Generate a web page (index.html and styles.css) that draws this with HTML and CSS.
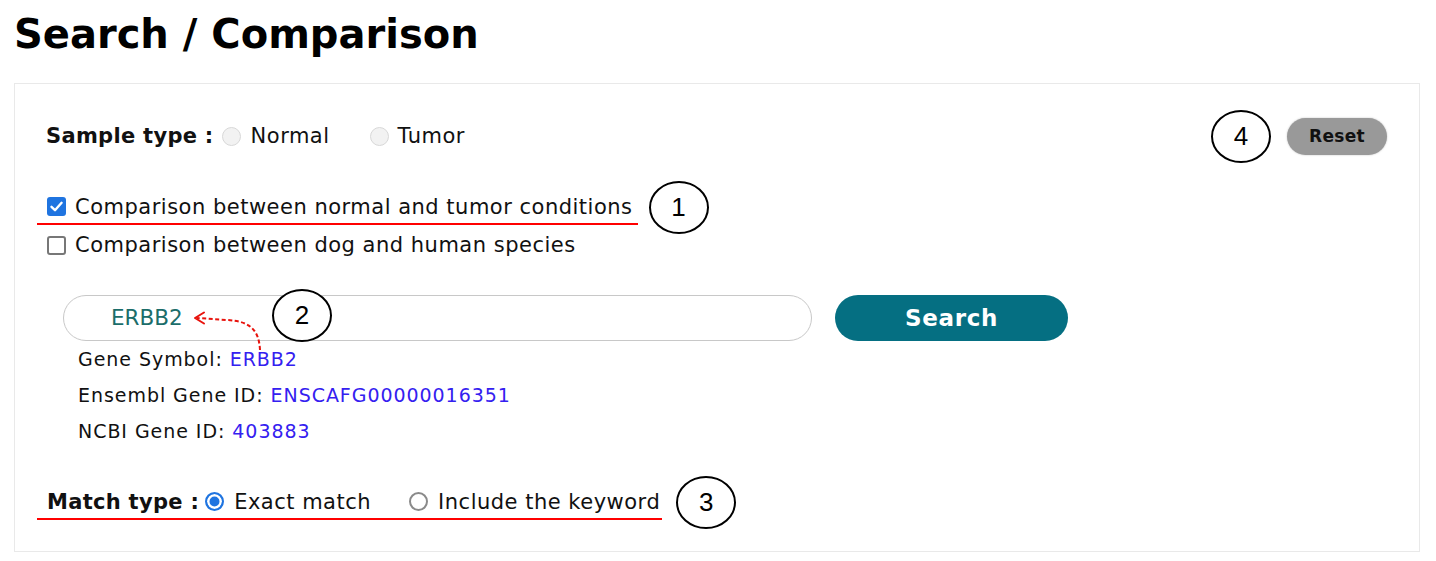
FILE: index.html
```html
<!DOCTYPE html>
<html lang="en">
<head>
<meta charset="utf-8">
<title>Search / Comparison</title>
<link rel="stylesheet" href="styles.css">
</head>
<body>
<div class="page">
  <h1 class="title">Search / Comparison</h1>
  <section class="panel">
    <div class="row-top">
      <div class="sample">
        <span class="label-bold">Sample type :</span>
        <span class="radio radio-disabled"></span><span class="opt">Normal</span>
        <span class="radio radio-disabled spaced"></span><span class="opt">Tumor</span>
      </div>
      <div class="reset-group">
        <span class="note">4</span>
        <button class="btn-reset" type="button">Reset</button>
      </div>
    </div>

    <div class="annot-row first">
      <div class="underlined check-line">
        <span class="check checked"><svg viewBox="0 0 19 19" width="19" height="19"><path d="M4.5 9.8 L8 13.2 L14.6 5.8" fill="none" stroke="#fff" stroke-width="2.4" stroke-linecap="round" stroke-linejoin="round"/></svg></span>
        <span class="opt">Comparison between normal and tumor conditions</span>
      </div>
      <span class="note gap11">1</span>
    </div>
    <div class="check-line plain">
      <span class="check"></span>
      <span class="opt">Comparison between dog and human species</span>
    </div>

    <div class="search-area">
      <div class="search-row">
        <div class="search-input">ERBB2</div>
        <button class="btn-search" type="button">Search</button>
      </div>
      <span class="note note-2">2</span>
      <svg class="arrow" width="240" height="70" viewBox="0 0 240 70">
        <path d="M223 55 C222 36 214 26 190 25 L160 23" fill="none" stroke="#e8120c" stroke-width="2" stroke-dasharray="4 2.5"/>
        <path d="M167 17.5 L158 23 L167 28.5" fill="none" stroke="#e8120c" stroke-width="2" stroke-linecap="round" stroke-linejoin="round"/>
      </svg>
      <ul class="gene-info">
        <li>Gene Symbol: <span class="val">ERBB2</span></li>
        <li>Ensembl Gene ID: <span class="val">ENSCAFG00000016351</span></li>
        <li>NCBI Gene ID: <span class="val">403883</span></li>
      </ul>
    </div>

    <div class="annot-row match">
      <div class="underlined match-line">
        <span class="label-bold">Match type :</span>
        <span class="radio radio-on"></span><span class="opt">Exact match</span>
        <span class="radio radio-off spaced2"></span><span class="opt">Include the keyword</span>
      </div>
      <span class="note gap15">3</span>
    </div>
  </section>
</div>
</body>
</html>
```

FILE: styles.css
```css
* { box-sizing: border-box; }
html, body { margin: 0; padding: 0; background: #fff; }
body {
  font-family: "DejaVu Sans", Verdana, sans-serif;
  color: #111;
}
.page { padding: 0 16px 0 14px; }

.title {
  margin: 11px 0 26px;
  font-size: 40px;
  line-height: 46px;
  font-weight: bold;
  color: #000;
}

.panel {
  border: 1px solid #e9e9e9;
  height: 469px;
  padding: 26px 32px 0 22px;
  position: relative;
}

.opt, .label-bold {
  font-size: 21px;
  letter-spacing: 0.5px;
  line-height: 30px;
}
.label-bold { font-weight: bold; letter-spacing: 0.3px; }

/* top row */
.row-top {
  display: flex;
  justify-content: space-between;
  align-items: center;
  height: 52px;
}
.sample {
  display: flex;
  align-items: center;
  padding-left: 9px;
}
.sample .label-bold { margin-right: 8px; }

.radio {
  display: inline-block;
  width: 19px;
  height: 19px;
  border-radius: 50%;
  flex: none;
  margin-right: 10px;
}
.radio-disabled {
  border: 1px solid #d8d8d8;
  background: #f2f2f2;
}
.radio.spaced { margin-left: 40px; margin-right: 9px; }
.radio-off {
  border: 2px solid #8a8a8a;
  background: #fff;
}
.radio-on {
  border: 2px solid #1f74e0;
  background: #1f74e0;
  box-shadow: inset 0 0 0 2.5px #fff;
}
.radio.spaced2 { margin-left: 38px; margin-right: 10px; }

.reset-group {
  display: flex;
  align-items: center;
  gap: 16px;
}
.btn-reset {
  width: 100px;
  height: 37px;
  border: none;
  border-radius: 19px;
  background: #999;
  box-shadow: 0 0 2px rgba(0,0,0,0.25);
  font-family: "DejaVu Sans", Verdana, sans-serif;
  font-weight: bold;
  font-size: 17px;
  letter-spacing: 0.3px;
  color: #111;
  padding: 0;
}

/* annotation circles */
.note {
  display: inline-flex;
  align-items: center;
  justify-content: center;
  width: 60px;
  height: 53px;
  border: 2px solid #000;
  border-radius: 50%;
  font-family: "Liberation Sans", Arial, sans-serif;
  font-size: 26px;
  color: #000;
  background: #fff;
  flex: none;
}

.annot-row {
  display: flex;
  align-items: center;
}
.annot-row.first { margin-top: 19px; }
.gap11 { margin-left: 11px; }
.gap15 { margin-left: 14px; }

.underlined {
  border-bottom: 2px solid #f00;
}

.check-line {
  display: flex;
  align-items: center;
  padding: 0 5px 0 10px;
  height: 34px;
}
.check-line.plain { margin-top: -4px; height: 30px; }

.check {
  width: 19px;
  height: 19px;
  border-radius: 3px;
  border: 2px solid #777;
  background: #fff;
  margin-right: 9px;
  flex: none;
  display: inline-block;
}
.check.checked {
  border: none;
  background: #1f74e0;
}
.check svg { display: block; }

/* search */
.search-area {
  position: relative;
  margin-top: 35px;
  padding-left: 26px;
}
.search-row {
  display: flex;
  align-items: center;
  gap: 23px;
}
.search-input {
  width: 749px;
  height: 46px;
  border: 1px solid #c8c8c8;
  border-radius: 23px;
  padding-left: 47px;
  font-size: 21.5px;
  line-height: 44px;
  color: #1b6d6a;
}
.btn-search {
  width: 233px;
  height: 46px;
  border: none;
  border-radius: 23px;
  background: #056f82;
  color: #fff;
  font-family: "DejaVu Sans", Verdana, sans-serif;
  font-weight: bold;
  font-size: 23px;
  letter-spacing: 0.7px;
  padding: 0;
}
.note-2 {
  position: absolute;
  left: 235px;
  top: -6px;
  z-index: 2;
}
.arrow {
  position: absolute;
  left: 0;
  top: 0;
  z-index: 1;
}

.gene-info {
  list-style: none;
  margin: 0;
  padding: 0 0 0 15px;
}
.gene-info li {
  font-size: 19px;
  letter-spacing: 0.95px;
  line-height: 36px;
  color: #111;
}
.gene-info .val { color: #3420f0; }

/* match */
.annot-row.match { margin-top: 27px; }
.match-line {
  display: flex;
  align-items: center;
  padding: 0 2px 0 10px;
  height: 34px;
}
.match-line .label-bold { margin-right: 6px; }
```
